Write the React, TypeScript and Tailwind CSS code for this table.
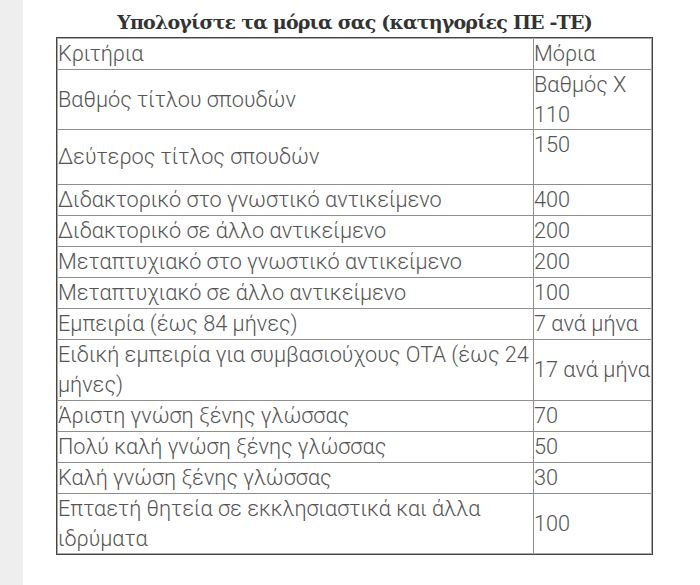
import React from "react";

type Row = {
  left: React.ReactNode;
  right: React.ReactNode;
  h: string;
  rightAlign: string;
};

const rows: Row[] = [
  { left: "Κριτήρια", right: "Μόρια", h: "h-[30px]", rightAlign: "items-center" },
  { left: "Βαθμός τίτλου σπουδών", right: (<>Βαθμός Χ<br />110</>), h: "h-[60px] border-t", rightAlign: "items-center" },
  { left: "Δεύτερος τίτλος σπουδών", right: "150", h: "h-[55px] border-t", rightAlign: "items-start" },
  { left: "Διδακτορικό στο γνωστικό αντικείμενο", right: "400", h: "h-[31px] border-t", rightAlign: "items-center" },
  { left: "Διδακτορικό σε άλλο αντικείμενο", right: "200", h: "h-[31px] border-t", rightAlign: "items-center" },
  { left: "Μεταπτυχιακό στο γνωστικό αντικείμενο", right: "200", h: "h-[31px] border-t", rightAlign: "items-center" },
  { left: "Μεταπτυχιακό σε άλλο αντικείμενο", right: "100", h: "h-[31px] border-t", rightAlign: "items-center" },
  { left: "Εμπειρία (έως 84 μήνες)", right: "7 ανά μήνα", h: "h-[31px] border-t", rightAlign: "items-center" },
  { left: (<>Ειδική εμπειρία για συμβασιούχους ΟΤΑ (έως 24<br />μήνες)</>), right: "17 ανά μήνα", h: "h-[61px] border-t", rightAlign: "items-center" },
  { left: "Άριστη γνώση ξένης γλώσσας", right: "70", h: "h-[31px] border-t", rightAlign: "items-center" },
  { left: "Πολύ καλή γνώση ξένης γλώσσας", right: "50", h: "h-[31px] border-t", rightAlign: "items-center" },
  { left: "Καλή γνώση ξένης γλώσσας", right: "30", h: "h-[31px] border-t", rightAlign: "items-center" },
  { left: (<>Επταετή θητεία σε εκκλησιαστικά και άλλα<br />ιδρύματα</>), right: "100", h: "h-[60px] border-t", rightAlign: "items-center" },
];

export default function App() {
  return (
    <div className="flex min-h-[585px] w-[700px] bg-white">
      <div className="w-[23px] shrink-0 bg-[#eeeeee]" />
      <div className="pl-[33px]">
        <div className="w-[597px]">
          <h2 className="h-[37px] pt-[9px] text-center [font-family:'DejaVu_Serif',serif] text-[19px] font-bold leading-[26px] tracking-[-0.8px] whitespace-nowrap text-[#333333]">
            Υπολογίστε τα μόρια σας (κατηγορίες ΠΕ -ΤΕ)
          </h2>
          <div className="border border-[#444444] [font-family:Roboto,sans-serif] text-[21.7px] font-light leading-[30px] text-[#555555]">
            <div className="border border-[#aaaaaa]">
              {rows.map((r, i) => (
                <div key={i} className={`flex border-[#8f8f8f] ${r.h}`}>
                  <div className="flex flex-1 items-center whitespace-nowrap">
                    <div>{r.left}</div>
                  </div>
                  <div className={`flex w-[118px] border-l border-[#8f8f8f] whitespace-nowrap ${r.rightAlign}`}>
                    <div>{r.right}</div>
                  </div>
                </div>
              ))}
            </div>
          </div>
        </div>
      </div>
    </div>
  );
}
